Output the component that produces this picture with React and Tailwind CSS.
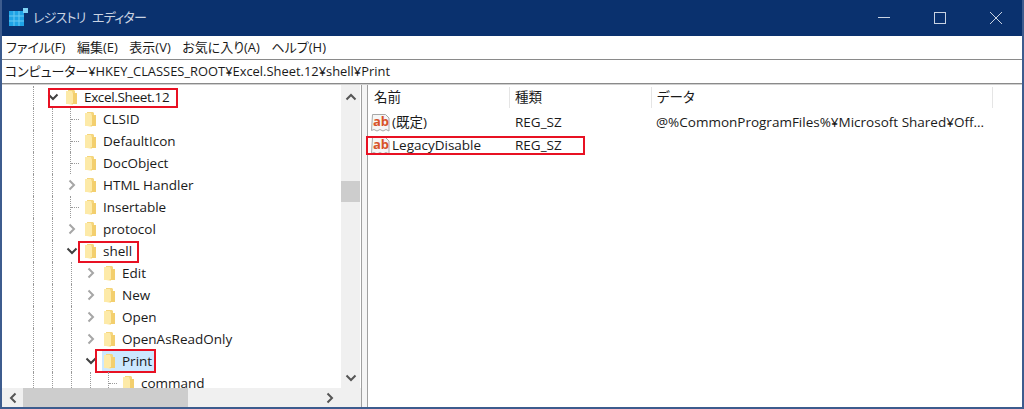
import React from "react";

const FONT = { fontFamily: '"Open Sans","Noto Sans CJK JP",sans-serif' };

function Folder() {
  return (
    <svg width="13" height="17" viewBox="0 0 13 17" className="shrink-0">
      <path d="M3 1h6l1 1v2h2v11H3z" fill="#f5d67d" />
      <path d="M1 2h6l1 3v11l-5-1H1z" fill="#fdeaa8" />
      <path d="M8 4h4v11H6l2-1z" fill="#f3cf6e" />
    </svg>
  );
}

function Chevron({ open }) {
  return (
    <svg width="12" height="12" viewBox="0 0 12 12" className="shrink-0">
      {open ? (
        <path d="M1.5 3.5 6 8l4.5-4.5" fill="none" stroke="#404040" strokeWidth="2" />
      ) : (
        <path d="M3.5 1.5 8 6l-4.5 4.5" fill="none" stroke="#a6a6a6" strokeWidth="2" />
      )}
    </svg>
  );
}

function Row({ level, kind, label, box, selected, tight }) {
  const guides = [];
  for (let i = 0; i <= level; i++) guides.push(i);
  return (
    <div className="relative flex h-[22px] shrink-0 items-stretch">
      <div className="w-[31px] shrink-0" />
      {guides.map((g) => (
        <div key={g} className="w-[19px] shrink-0 border-l border-dotted border-[#9a9a9a]" />
      ))}
      <div className="relative -ml-[6px] mr-[5px] flex w-[13px] shrink-0 items-center justify-center">
        {kind === "leaf" ? (
          <div className="ml-[6px] flex h-full w-full items-center border-l border-dotted border-[#9a9a9a]">
            <div className="h-0 w-[8px] border-t border-dotted border-[#9a9a9a]" />
          </div>
        ) : (
          <Chevron open={kind === "open"} />
        )}
      </div>
      <div
        className={`flex items-center gap-[6px] pr-[3px] pl-[1px] text-[13.5px] text-[#1a1a1a] ${
          selected ? "bg-[#cce8ff]" : ""
        }`}
      >
        <Folder />
        <span className={`whitespace-nowrap ${tight ? "tracking-[-0.35px]" : ""}`}>{label}</span>
      </div>
      {box && <div className={`absolute border-[2px] border-[#e81123] ${box}`} />}
    </div>
  );
}

function RegIcon() {
  return (
    <svg width="20" height="20" viewBox="0 0 20 20" className="shrink-0">
      <path d="M1.5 1.5h13l3.5 3.5v13l-3-1.5-3 1.5-3-1.5-3 1.5-3-1.5-2.5 1z" fill="#f6f6f6" stroke="#a8a8a8" />
      <text x="2" y="13" fontSize="13" fontWeight="700" fill="#d8532a" fontFamily="Open Sans, sans-serif">ab</text>
    </svg>
  );
}

function TitleIcon() {
  return (
    <svg width="20" height="20" viewBox="0 0 20 20" className="shrink-0">
      <rect x="0" y="3" width="15" height="15" fill="#1fa3e6" />
      <path d="M5 3v15M10 3v15M0 8h15M0 13h15" stroke="#6ccaf2" strokeWidth="1" />
      <rect x="14" y="0" width="5" height="5" fill="#7fd3f5" />
    </svg>
  );
}

const rows = [
  { level: 0, kind: "open", label: "Excel.Sheet.12", tight: true, box: "left-[46px] top-[2px] h-[20px] w-[130px]" },
  { level: 1, kind: "leaf", label: "CLSID" },
  { level: 1, kind: "leaf", label: "DefaultIcon" },
  { level: 1, kind: "leaf", label: "DocObject" },
  { level: 1, kind: "closed", label: "HTML Handler" },
  { level: 1, kind: "leaf", label: "Insertable" },
  { level: 1, kind: "closed", label: "protocol" },
  { level: 1, kind: "open", label: "shell", box: "left-[76px] top-[1px] h-[22px] w-[61px]" },
  { level: 2, kind: "closed", label: "Edit" },
  { level: 2, kind: "closed", label: "New" },
  { level: 2, kind: "closed", label: "Open" },
  { level: 2, kind: "closed", label: "OpenAsReadOnly" },
  { level: 2, kind: "open", label: "Print", box: "left-[93px] -top-[1px] h-[24px] w-[61px]", selected: true },
  { level: 3, kind: "leaf", label: "command" },
];

export default function App() {
  return (
    <div className="flex h-[409px] w-[1024px] flex-col overflow-hidden border-x-2 border-b-2 border-[#3d5c8e] bg-white [font-feature-settings:'palt']" style={FONT}>
      <div className="-mx-[2px] flex h-[36px] shrink-0 items-center bg-[#0a316e] pl-[9px]">
        <TitleIcon />
        <span className="ml-[4px] text-[13px] tracking-[-0.8px] [word-spacing:4px] text-[#c9d3e2]">レジストリ エディター</span>
        <div className="ml-auto flex items-center pr-[5px]">
          <svg width="46" height="36" viewBox="0 0 46 36"><path d="M17 17.5h12" stroke="#c9d3e2" strokeWidth="1" /></svg>
          <svg width="46" height="36" viewBox="0 0 46 36" className="ml-[10px]"><rect x="17.5" y="12.5" width="11" height="11" fill="none" stroke="#c9d3e2" /></svg>
          <svg width="46" height="36" viewBox="0 0 46 36" className="ml-[10px]"><path d="M17 12l12 12M29 12 17 24" stroke="#c9d3e2" strokeWidth="1" /></svg>
        </div>
      </div>
      <div className="flex h-[23px] shrink-0 items-center gap-[11.5px] pl-[4px] text-[13px] text-[#1a1a1a]">
        <span>ファイル(F)</span>
        <span>編集(E)</span>
        <span>表示(V)</span>
        <span>お気に入り(A)</span>
        <span>ヘルプ(H)</span>
      </div>
      <div className="flex h-[25px] shrink-0 items-center border-y border-[#8a8a8a] pl-[3px] text-[12.9px] text-[#1a1a1a]">
        コンピューター¥HKEY_CLASSES_ROOT¥Excel.Sheet.12¥shell¥Print
      </div>
      <div className="flex min-h-0 flex-1 border-t border-[#d0d0d0]">
        <div className="flex w-[360px] shrink-0 flex-col border-r border-[#a0a0a0]">
          <div className="flex min-h-0 flex-1">
            <div className="flex min-w-0 flex-1 flex-col overflow-hidden pt-[1px]">
              {rows.map((r) => (
                <Row key={r.label} {...r} />
              ))}
            </div>
            <div className="mr-[1px] flex w-[19px] shrink-0 flex-col items-center bg-[#f0f0f0] pt-[8px] pb-[6px]">
              <svg width="12" height="8" viewBox="0 0 12 8" className="shrink-0"><path d="M1.5 6.5 6 2l4.5 4.5" fill="none" stroke="#555" strokeWidth="2" /></svg>
              <div className="mt-[80px] h-[21px] w-full shrink-0 bg-[#cdcdcd]" />
              <div className="flex-1" />
              <svg width="12" height="8" viewBox="0 0 12 8" className="shrink-0"><path d="M1.5 1.5 6 6l4.5-4.5" fill="none" stroke="#555" strokeWidth="2" /></svg>
            </div>
          </div>
          <div className="flex h-[19px] shrink-0 items-center bg-[#f0f0f0]">
            <div className="flex w-[21px] justify-center">
              <svg width="8" height="12" viewBox="0 0 8 12"><path d="M6.5 1.5 2 6l4.5 4.5" fill="none" stroke="#555" strokeWidth="2" /></svg>
            </div>
            <div className="h-full w-[165px] bg-[#cdcdcd]" />
            <div className="ml-auto flex w-[62px] justify-center">
              <svg width="8" height="12" viewBox="0 0 8 12"><path d="M1.5 1.5 6 6l-4.5 4.5" fill="none" stroke="#555" strokeWidth="2" /></svg>
            </div>
          </div>
        </div>
        <div className="w-[5px] shrink-0 bg-[#f5f5f5]" />
        <div className="flex min-w-0 flex-1 flex-col border-l border-[#a0a0a0] text-[13.5px] text-[#1a1a1a]">
          <div className="flex h-[25px] shrink-0 items-center">
            <div className="w-[142px] border-r border-[#e5e5e5] pl-[6px]">名前</div>
            <div className="w-[142px] border-r border-[#e5e5e5] pl-[5px]">種類</div>
            <div className="w-[341px] border-r border-[#e5e5e5] pl-[5px]">データ</div>
          </div>
          <div className="mt-[1px] flex h-[23px] shrink-0 items-center pl-[3px]">
            <div className="flex w-[144px] items-center gap-[1px]"><RegIcon /><span>(既定)</span></div>
            <div className="w-[141px]">REG_SZ</div>
            <div className="whitespace-nowrap">@%CommonProgramFiles%¥Microsoft Shared¥Off...</div>
          </div>
          <div className="relative flex h-[23px] shrink-0 items-center pl-[3px]">
            <div className="flex w-[144px] items-center gap-[1px]"><RegIcon /><span>LegacyDisable</span></div>
            <div className="w-[141px]">REG_SZ</div>
            <div className="absolute -left-[2px] top-[2px] h-[19px] w-[219px] border-[2px] border-[#e81123]" />
          </div>
        </div>
      </div>
    </div>
  );
}
